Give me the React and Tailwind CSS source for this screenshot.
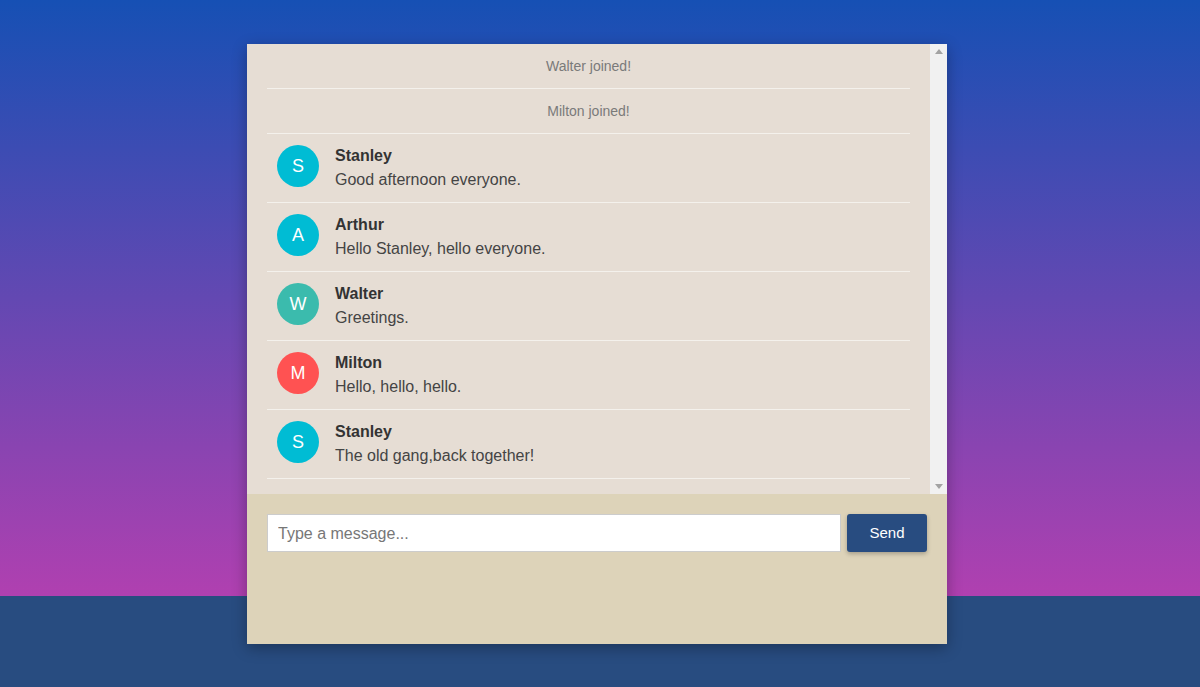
import React from 'react';

const messages = [
  { type: 'join', text: 'Walter joined!' },
  { type: 'join', text: 'Milton joined!' },
  { type: 'msg', name: 'Stanley', text: 'Good afternoon everyone.', color: 'bg-[#00bcd4]' },
  { type: 'msg', name: 'Arthur', text: 'Hello Stanley, hello everyone.', color: 'bg-[#00bcd4]' },
  { type: 'msg', name: 'Walter', text: 'Greetings.', color: 'bg-[#3bbbad]' },
  { type: 'msg', name: 'Milton', text: 'Hello, hello, hello.', color: 'bg-[#ff5252]' },
  { type: 'msg', name: 'Stanley', text: 'The old gang,back together!', color: 'bg-[#00bcd4]' },
];

const JoinNotice = ({ text }) => (
  <li className="h-[45px] border-b border-[#f4f1ec] flex items-center justify-center text-[14px] text-[#7a7a7a]">
    {text}
  </li>
);

const Message = ({ name, text, color }) => (
  <li className="h-[69px] border-b border-[#f4f1ec] flex items-start pt-[10px]">
    <div className={`${color} w-[42px] h-[42px] mt-[1px] ml-[10px] rounded-full flex items-center justify-center text-white text-[18px] leading-none pb-px shrink-0`}>
      {name[0]}
    </div>
    <div className="ml-[16px]">
      <div className="font-bold text-[16px] leading-[24px] text-[#333]">{name}</div>
      <div className="text-[16px] leading-[24px] text-[#444]">{text}</div>
    </div>
  </li>
);

// fake scrollbar track (no thumb, content fits)
const ScrollTrack = () => (
  <div className="w-[17px] bg-[#f1f1f1] flex flex-col justify-between items-center py-[5px]">
    <svg width="8" height="5" viewBox="0 0 8 5"><path d="M4 0L8 5H0z" fill="#a3a3a3" /></svg>
    <svg width="8" height="5" viewBox="0 0 8 5"><path d="M0 0h8L4 5z" fill="#a3a3a3" /></svg>
  </div>
);

export default function App() {
  return (
    <div
      className="min-h-screen h-[687px] bg-[linear-gradient(to_bottom,#1650b4_0px,#b040b0_596px,#284c80_596px,#284c80_100%)] pt-[44px] pr-[6px] flex justify-center"
      style={{ fontFamily: '"Liberation Sans", Arial, sans-serif' }}
    >
      <div className="w-[700px] h-[600px] flex flex-col shadow-[0_4px_14px_rgba(0,0,0,0.3)]">
        <div className="h-[450px] bg-[#e6ddd4] flex">
          <ul className="flex-1 pl-5 pr-5">
            {messages.map((m, i) =>
              m.type === 'join'
                ? <JoinNotice key={i} text={m.text} />
                : <Message key={i} {...m} />
            )}
          </ul>
          <ScrollTrack />
        </div>
        <div className="flex-1 bg-[#ddd3b9] px-5 pt-5">
          <div className="flex gap-[6px]">
            <input
              autoFocus
              type="text"
              placeholder="Type a message..."
              className="flex-1 h-[38px] bg-white border border-[#ccc] px-[10px] pt-[2px] text-[16px] text-[#333] placeholder:text-[#777] outline-none"
            />
            <button className="w-[80px] h-[38px] bg-[#284c80] text-white text-[15px] rounded-[3px] shadow-[0_2px_4px_rgba(0,0,0,0.25)]">
              Send
            </button>
          </div>
        </div>
      </div>
    </div>
  );
}
